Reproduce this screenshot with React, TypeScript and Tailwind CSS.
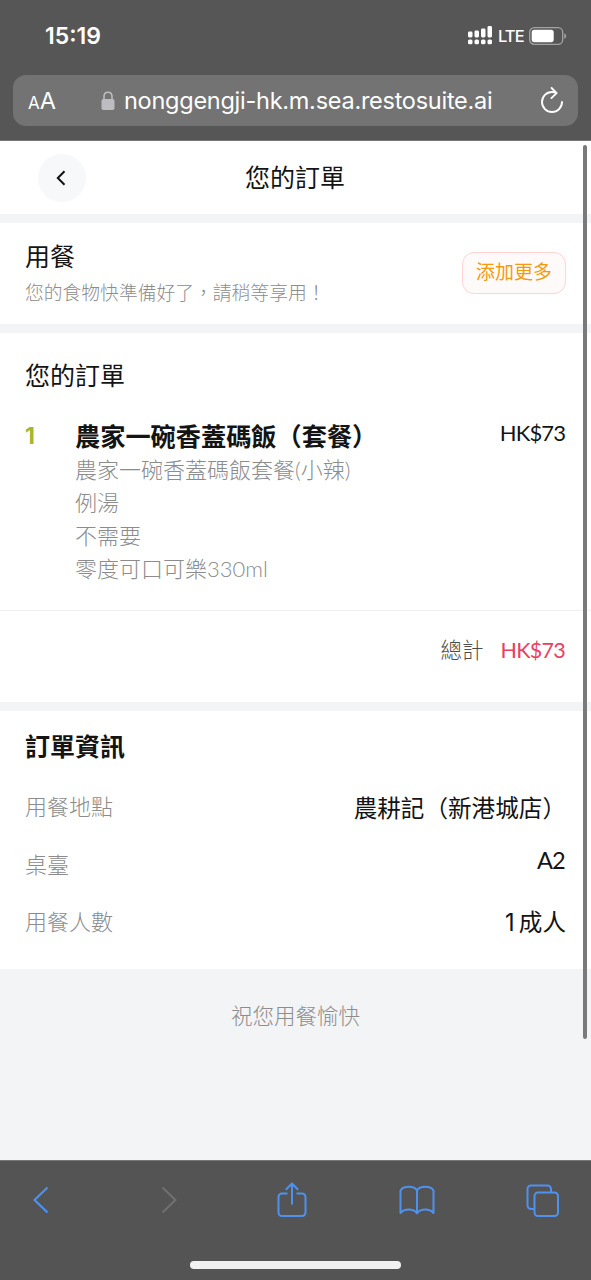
import React from "react";

interface OrderItem {
  id: number;
  quantity: number;
  name: string;
  options: string[];
  price: string;
}

interface InfoRow {
  label: string;
  value: string;
  rowClass: string;
  valueClass: string;
}

const items: OrderItem[] = [
  {
    id: 1,
    quantity: 1,
    name: "農家一碗香蓋碼飯（套餐）",
    options: ["農家一碗香蓋碼飯套餐(小辣)", "例湯", "不需要", "零度可口可樂330ml"],
    price: "HK$73",
  },
];

const infoRows: InfoRow[] = [
  {
    label: "用餐地點",
    value: "農耕記（新港城店）",
    rowClass: "h-[58px]",
    valueClass: "font-['Noto_Sans_CJK_SC',sans-serif]",
  },
  {
    label: "桌臺",
    value: "A2",
    rowClass: "h-[57px]",
    valueClass: "-mt-[5px] mr-px tracking-[-0.8px]",
  },
  {
    label: "用餐人數",
    value: "1 成人",
    rowClass: "h-9",
    valueClass: "mt-px font-[Inter,'Noto_Sans_CJK_TC',sans-serif] [word-spacing:-2.5px]",
  },
];

const SignalIcon = () => (
  <svg width="25" height="19" viewBox="0 0 25 19" fill="#fff">
    <rect x="0" y="5.5" width="4.5" height="6" rx="1.4" />
    <rect x="6.5" y="4.5" width="4.5" height="7" rx="1.4" />
    <rect x="13" y="2.5" width="4.5" height="9" rx="1.4" />
    <rect x="19.5" y="0" width="4.5" height="11.5" rx="1.4" />
    <rect x="0" y="13.5" width="4.5" height="4.8" rx="1.6" />
    <rect x="6.5" y="13.5" width="4.5" height="4.8" rx="1.6" />
    <rect x="13" y="13.5" width="4.5" height="4.8" rx="1.6" />
    <rect x="19.5" y="13.5" width="4.5" height="4.8" rx="1.6" />
  </svg>
);

const BatteryIcon = () => (
  <svg width="38" height="18" viewBox="0 0 38 18" fill="none">
    <rect x="0.7" y="0.7" width="33" height="16.6" rx="4.6" stroke="#a3a3a3" strokeWidth="1.3" />
    <rect x="2.7" y="2.8" width="22" height="12.4" rx="2.6" fill="#fff" />
    <path d="M35.3 6.2c1.2.5 1.9 1.6 1.9 2.8s-.7 2.3-1.9 2.8z" fill="#a3a3a3" />
  </svg>
);

const LockIcon = () => (
  <svg width="14" height="20" viewBox="0 0 14 20" fill="none">
    <path d="M3 9V5.6C3 3 4.7 1.2 7 1.2S11 3 11 5.6V9" stroke="#bdbdc1" strokeWidth="1.6" />
    <rect x="0.5" y="8" width="13" height="11" rx="2" fill="#bdbdc1" />
  </svg>
);

const ReloadIcon = () => (
  <svg
    width="24"
    height="28"
    viewBox="0 0 24 28"
    fill="none"
    stroke="#fff"
    strokeWidth="1.9"
    strokeLinecap="round"
    strokeLinejoin="round"
  >
    <path d="M22 15A10 10 0 1 1 12 5c1.5 0 3 .2 4.300.9" />
    <path d="M11.600 1l5 5.100-5.200 5" />
  </svg>
);

const StatusBar = () => (
  <div className="flex h-[75px] items-start justify-between pl-[45px] pr-6">
    <span className="mt-[21px] text-[23px] font-semibold leading-[30px] text-white">15:19</span>
    <div className="mt-[26px] flex h-[19px] items-center">
      <SignalIcon />
      <span className="ml-[5px] w-[31px] text-[16.5px] font-medium leading-5 tracking-[-0.9px] text-white">
        LTE
      </span>
      <BatteryIcon />
    </div>
  </div>
);

const AddressBar = () => (
  <div className="mx-[13px] flex h-[51px] items-center rounded-[13px] bg-[#737373] text-white">
    <div className="flex w-[88px] items-baseline pl-[15px] pt-[3px]">
      <span className="text-[17px] leading-8">A</span>
      <span className="text-[23.5px] leading-8">A</span>
    </div>
    <LockIcon />
    <span className="ml-[9px] whitespace-nowrap text-[23.5px] leading-8 tracking-[-0.26px]">
      nonggengji-hk.m.sea.restosuite.ai
    </span>
    <div className="ml-auto mr-[14px]">
      <ReloadIcon />
    </div>
  </div>
);

const PageHeader = () => (
  <div className="grid h-[73px] grid-cols-[1fr_auto_1fr] items-center bg-white">
    <button className="ml-[38px] flex size-12 items-center justify-center rounded-full bg-[#f6f8fa]">
      <svg
        className="mr-0.5"
        width="10"
        height="16"
        viewBox="0 0 10 16"
        fill="none"
        stroke="#111"
        strokeWidth="2"
      >
        <path d="M8.500 1.200L1.800 8l6.700 6.800" />
      </svg>
    </button>
    <h1 className="pb-px pr-px text-[25px] leading-9 text-[#141414]">您的訂單</h1>
  </div>
);

const DiningStatus = () => (
  <section className="flex h-[101px] items-start justify-between bg-white px-[25px]">
    <div className="pt-[15px]">
      <h2 className="text-[25px] leading-9 text-[#141414]">用餐</h2>
      <p className="mt-[3px] text-[18.8px] font-light leading-8 text-[#8c8c8c]">
        您的食物快準備好了，請稍等享用！
      </p>
    </div>
    <button className="mt-[29px] h-[42px] w-[104px] rounded-xl border border-[#fdd5d2] bg-[#fffafa] pb-0.5 text-[19px] text-[#f59a0c]">
      添加更多
    </button>
  </section>
);

const OrderSection = () => (
  <section className="h-[369px] bg-white pt-6">
    <h2 className="px-[25px] text-[25px] leading-9 text-[#141414]">您的訂單</h2>
    {items.map((item) => (
      <div
        key={item.id}
        className="mt-6 flex h-[194px] border-b border-[#f0f0f0] px-[25px]"
      >
        <span className="mt-px w-[50px] font-[Inter,sans-serif] text-[23px] font-bold leading-9 text-[#a3b82b]">
          {item.quantity}
        </span>
        <div className="flex-1">
          <h3 className="whitespace-nowrap font-['Noto_Sans_CJK_SC',sans-serif] text-[25.2px] font-bold leading-9 text-[#141414]">
            {item.name}
          </h3>
          {item.options.map((option) => (
            <p
              key={option}
              className="whitespace-nowrap text-[22px] font-light leading-[33px] text-[#8c8c8c]"
            >
              {option}
            </p>
          ))}
        </div>
        <span className="mr-px text-[22px] leading-[31px] tracking-[-0.9px] text-[#141414]">
          {item.price}
        </span>
      </div>
    ))}
    <div className="mt-[21px] flex justify-end gap-[17px] pl-[25px] pr-[26px] text-[21.5px] leading-9">
      <span className="font-light text-[#4c4c4c]">總計</span>
      <span className="tracking-[-0.7px] text-[#ea4060]">HK$73</span>
    </div>
  </section>
);

const OrderInfo = () => (
  <section className="h-[258px] bg-white px-[25px] pt-[17px]">
    <h2 className="text-[25px] font-bold leading-9 text-[#141414]">訂單資訊</h2>
    <div className="mt-[25px]">
      {infoRows.map((row) => (
        <div key={row.label} className={`flex justify-between leading-9 ${row.rowClass}`}>
          <span className="text-[22px] font-light text-[#8c8c8c]">{row.label}</span>
          <span className={`text-[23.6px] text-[#141414] ${row.valueClass}`}>{row.value}</span>
        </div>
      ))}
    </div>
  </section>
);

const Toolbar = () => (
  <nav className="flex h-[120px] flex-col items-center justify-between border-t border-[#777] bg-[#545454] pb-[11px]">
    <div className="grid h-[78px] w-full grid-cols-5 place-items-center text-[#4e92ef]">
      <svg
        className="mr-9"
        width="18"
        height="28"
        viewBox="0 0 18 28"
        fill="none"
        stroke="currentColor"
        strokeWidth="2.2"
      >
        <path d="M15.500 1.500L2.500 14l13 12.500" strokeLinejoin="round" />
      </svg>
      <svg
        className="mr-4"
        width="18"
        height="28"
        viewBox="0 0 18 28"
        fill="none"
        stroke="#707070"
        strokeWidth="2"
      >
        <path d="M2.500 1.500L15.500 14l-13 12.500" strokeLinejoin="round" />
      </svg>
      <svg
        className="mr-1.5"
        width="30"
        height="36"
        viewBox="0 0 30 36"
        fill="none"
        stroke="currentColor"
        strokeWidth="2"
        strokeLinejoin="round"
      >
        <path d="M10.500 11.500H5a3.500 3.500 0 0 0-3.500 3.500v15.500a3.500 3.500 0 0 0 3.500 3.500h20a3.500 3.500 0 0 0 3.500-3.500V15a3.500 3.500 0 0 0-3.500-3.500H19.500" />
        <path d="M15 22.500V2M8.800 7.800L15 1.500l6.200 6.300" />
      </svg>
      <svg
        className="ml-1.5"
        width="36"
        height="30"
        viewBox="0 0 36 30"
        fill="none"
        stroke="currentColor"
        strokeWidth="2"
        strokeLinejoin="round"
      >
        <path d="M18 5.500C16.500 3 13.500 1.800 9.800 1.800S3 3 1.500 5.500V28c2-2.300 4.800-3.400 8.300-3.400s6.200 1.200 8.200 3.700c2-2.500 4.700-3.700 8.200-3.700s6.300 1.100 8.300 3.400V5.500c-1.500-2.500-4.600-3.700-8.300-3.700S19.500 3 18 5.500zM18 5.500v22" />
      </svg>
      <svg
        className="ml-[22px]"
        width="33"
        height="33"
        viewBox="0 0 33 33"
        fill="none"
        stroke="currentColor"
        strokeWidth="2"
      >
        <path d="M8.500 25H5a3.500 3.500 0 0 1-3.500-3.500V5A3.500 3.500 0 0 1 5 1.500h16.500A3.500 3.500 0 0 1 25 5v3.500" />
        <rect x="8.500" y="8.500" width="23.500" height="23.500" rx="3.500" />
      </svg>
    </div>
    <div className="h-2 w-[211px] rounded-full bg-[#f1f1f1]" />
  </nav>
);

export default function App() {
  return (
    <div className="relative flex h-[1280px] w-[591px] flex-col overflow-hidden bg-[#f2f4f6] font-[Lato,'Noto_Sans_CJK_TC',sans-serif]">
      <header className="h-[141px] border-b border-[#777] bg-[#565656] font-[Inter,sans-serif]">
        <StatusBar />
        <AddressBar />
      </header>
      <main className="flex flex-1 flex-col">
        <div className="flex flex-col gap-[9px]">
          <PageHeader />
          <DiningStatus />
          <OrderSection />
          <OrderInfo />
        </div>
        <p className="mt-[29px] text-center text-[21.5px] font-light leading-9 text-[#8c8c8c]">
          祝您用餐愉快
        </p>
      </main>
      <Toolbar />
      {/* scroll indicator */}
      <div className="absolute right-[4px] top-[145px] h-[894px] w-1 rounded-full bg-[#7a7a7a]" />
    </div>
  );
}
